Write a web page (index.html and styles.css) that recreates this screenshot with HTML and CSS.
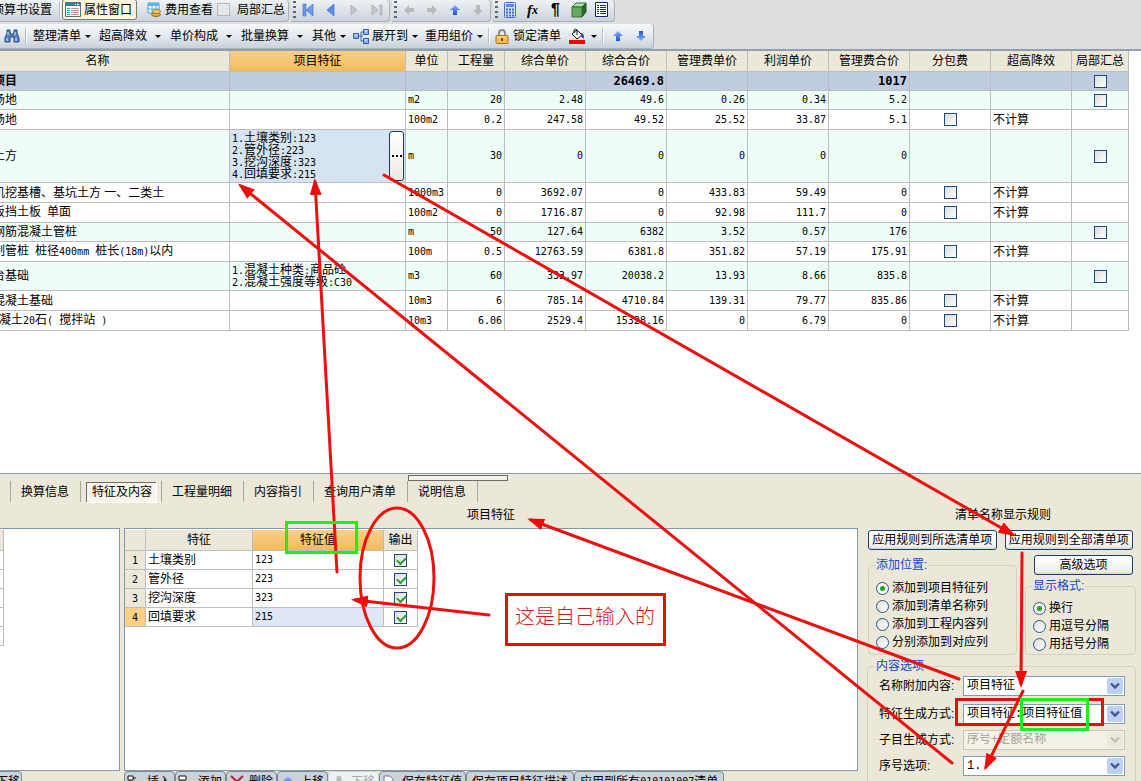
FILE: index.html
```html
<!DOCTYPE html>
<html lang="zh-CN">
<head>
<meta charset="utf-8">
<title>项目特征</title>
<link rel="stylesheet" href="styles.css">
</head>
<body>
<svg class="defs" aria-hidden="true">
  <defs>
    <linearGradient id="blue" x1="0" y1="0" x2="0" y2="1"><stop offset="0" stop-color="#8fb4ff"/><stop offset="1" stop-color="#1f4fd0"/></linearGradient>
    <symbol id="arrow" viewBox="0 0 12 12"><path d="M6 1l5 5H8v5H4V6H1z"/></symbol>
    <symbol id="chev" viewBox="0 0 10 8"><path d="M1 1.500l4 4 4-4" fill="none" stroke="currentColor" stroke-width="2.400"/></symbol>
  </defs>
</svg>
<div class="app">
  <header class="toolbars">
    <div class="bar-row">
      <div class="strip strip-top file-strip">
        <button class="tb">预算书设置</button><i class="sep"></i>
        <button class="tb pressed"><svg width="16" height="15" viewBox="0 0 16 15"><path d="M.5.5h15v14H.5z" fill="#fff" stroke="#58717c"/><path d="M1 1h14v3H1z" fill="#168ca8"/><path d="M10 2h1v1h-1zM12 2h2v1h-2z" fill="#fff"/><path d="M2 6.500h3M2 8.500h3M2 10.500h3M2 12.500h3" stroke="#2a9a8a"/><path d="M6 6.500h8M6 8.500h8M6 10.500h8M6 12.500h8" stroke="#c48f9b"/></svg>属性窗口</button>
        <button class="tb cost"><svg width="14" height="15" viewBox="0 0 14 15"><path d="M1 1h11v10H1z" fill="#e9f5ff" stroke="#4aa0d8"/><path d="M1 1h11v3H1z" fill="#59b7ee"/><path d="M5 4v7M9 4v7M1 7h11" stroke="#6aaedc"/><ellipse cx="9" cy="12.500" rx="4.500" ry="2" fill="#e5a93c" stroke="#9b6a1c"/><ellipse cx="9.500" cy="9.500" rx="4" ry="2" fill="#f8cf66" stroke="#a9752a"/></svg>费用查看</button>
        <label class="tb-check"><input type="checkbox" class="soft">局部汇总</label>
      </div>
      <div class="strip strip-top nav-strip"><i class="grip"></i>
        <button class="ic" aria-label="首条"><svg width="14" height="14" viewBox="0 0 14 14" fill="#6f9bea"><path d="M2 1h3v12H2zM12 1v12L5 7z" stroke="#3f68bd" stroke-width=".6"/></svg></button>
        <button class="ic" aria-label="上一条"><svg width="14" height="14" viewBox="0 0 14 14"><path d="M10 1v12L3 7z" fill="#5b8cf0" stroke="#3c65bd" stroke-width=".6"/></svg></button>
        <button class="ic" aria-label="下一条"><svg width="14" height="14" viewBox="0 0 14 14"><path d="M4 2v10l6-5z" fill="#c3c6c9" stroke="#afb4b8"/></svg></button>
        <button class="ic" aria-label="末条"><svg width="14" height="14" viewBox="0 0 14 14" fill="#c3c6c9" stroke="#afb4b8"><path d="M2 2v10l6-5zM10 2h2v10h-2z"/></svg></button>
      </div>
      <div class="strip strip-top nav-strip"><i class="grip"></i>
        <button class="ic" aria-label="左移"><svg class="off left" width="12" height="12"><use href="#arrow"/></svg></button>
        <button class="ic" aria-label="右移"><svg class="off right" width="12" height="12"><use href="#arrow"/></svg></button>
        <button class="ic" aria-label="上移"><svg class="on" width="12" height="12"><use href="#arrow"/></svg></button>
        <button class="ic" aria-label="下移"><svg class="off down" width="12" height="12"><use href="#arrow"/></svg></button>
      </div>
      <div class="strip strip-top nav-strip"><i class="grip"></i>
        <button class="ic" aria-label="计算器"><svg width="14" height="16" viewBox="0 0 14 16"><rect x="1.500" y=".5" width="11" height="15" rx="1" fill="#d5e4fa" stroke="#4a6eb2"/><path d="M3 2h8v3H3z" fill="#5f8ad8"/><path d="M3 7.500h2m1 0h2m1 0h2M3 10.500h2m1 0h2m1 0h2M3 13.500h2m1 0h2m1 0h2" stroke="#3f6cc0" stroke-width="2"/></svg></button>
        <button class="ic fx" aria-label="函数"><i>f</i><small>x</small></button>
        <button class="ic pil" aria-label="段落">¶</button>
        <button class="ic" aria-label="构件"><svg width="16" height="16" viewBox="0 0 16 16"><path d="M1 5l4-4h10l-4 4z" fill="#b7dfae" stroke="#356f35"/><path d="M11 5l4-4v9l-4 5z" fill="#27692e" stroke="#245227"/><path d="M1 5h10v10H1z" fill="#66a960" stroke="#356f35"/></svg></button>
        <button class="ic" aria-label="清单"><svg width="13" height="15" viewBox="0 0 13 15"><path d="M.5.5h12v14H.5z" fill="#fff" stroke="#12238c"/><path d="M2 3.500h2m1 0h6M2 5.500h2m1 0h6M2 7.500h2m1 0h6M2 9.500h2m1 0h6M2 11.500h2m1 0h6" stroke="#12238c"/></svg></button>
      </div>
    </div>
    <div class="bar-row">
      <div class="strip tool-strip">
        <button class="find" aria-label="查找"><svg width="16" height="14" viewBox="0 0 16 14"><path d="M3 1h3v3h1v2h2V4h1V1h3v3l2 5v4h-5V8H6v5H1V9l2-5z" fill="#5a82bf" stroke="#254b86"/><path d="M3 9v3M12 9v3M4 3v3M11 3v3" stroke="#d8e9ff"/></svg></button><i class="sep"></i>
        <button class="drop tight first">整理清单<b></b></button>
        <button class="drop">超高降效<b></b></button>
        <button class="drop">单价构成<b></b></button>
        <button class="drop">批量换算<b></b></button>
        <button class="drop tight">其他<b></b></button>
        <button class="drop tight"><svg width="16" height="15" viewBox="0 0 16 15"><path d="M5 7h5M8 3v9M8 3h3M8 12h3" stroke="#3d62a8" fill="none"/><path d="M.5 4.500h5v5h-5zM10.500.5h5v5h-5zM10.500 9.500h5v5h-5z" fill="#8ab0ee" stroke="#345ca6"/><path d="M2 6h2M12 2h2M12 11h2" stroke="#fff"/></svg>展开到<b></b></button>
        <button class="drop tight last">重用组价<b></b></button><i class="sep"></i>
        <button class="tb lock"><svg width="14" height="15" viewBox="0 0 14 15"><path d="M4 7V4a3 3 0 016 0v3" fill="none" stroke="#8b8f96" stroke-width="2"/><rect x="1" y="6.500" width="12" height="8" rx="1" fill="#f2bf50" stroke="#a8731c"/><path d="M3 8h8" stroke="#ffe9a6"/><path d="M7 9v3" stroke="#7c4f12" stroke-width="2"/></svg>锁定清单</button>
        <button class="drop paint" aria-label="填充颜色"><svg width="16" height="16" viewBox="0 0 16 16"><path d="M3 6l5-4 5 5-5 4z" fill="#fff" stroke="#111"/><path d="M5 5V2a2 2 0 013 0v5" fill="none" stroke="#111"/><path d="M12 5q4 1 2.500 6L12 8z" fill="#1c3fae"/><path d="M0 12h16v4H0z" fill="#f00"/></svg><b></b></button><i class="sep thin"></i>
        <button class="ic" aria-label="向上"><svg class="on" width="12" height="12"><use href="#arrow"/></svg></button>
        <button class="ic" aria-label="向下"><svg class="on down" width="12" height="12"><use href="#arrow"/></svg></button>
      </div>
    </div>
  </header>

  <main class="bill">
    <table class="grid bill-grid">
      <colgroup><col class="c-name"><col class="c-feat"><col class="c-unit"><col class="c-qty"><col class="c-num"><col class="c-num"><col class="c-num"><col class="c-num"><col class="c-num"><col class="c-num"><col class="c-num"><col class="c-sum"></colgroup>
      <thead><tr><th class="name-head">名称</th><th class="hot">项目特征</th><th>单位</th><th>工程量</th><th>综合单价</th><th>综合合价</th><th>管理费单价</th><th>利润单价</th><th>管理费合价</th><th>分包费</th><th>超高降效</th><th>局部汇总</th></tr></thead>
      <tbody>
        <tr class="h19 total"><td class="nm">项目</td><td></td><td></td><td></td><td></td><td class="n">26469.8</td><td></td><td></td><td class="n">1017</td><td></td><td></td><td class="ck"><input type="checkbox" aria-label="局部汇总"></td></tr>
        <tr class="h19 item"><td class="nm">场地</td><td></td><td class="u">m2</td><td class="n">20</td><td class="n">2.48</td><td class="n">49.6</td><td class="n">0.26</td><td class="n">0.34</td><td class="n">5.2</td><td></td><td></td><td class="ck"><input type="checkbox" aria-label="局部汇总"></td></tr>
        <tr class="h20"><td class="nm">场地</td><td></td><td class="u">100m2</td><td class="n">0.2</td><td class="n">247.58</td><td class="n">49.52</td><td class="n">25.52</td><td class="n">33.87</td><td class="n">5.1</td><td class="ck"><input type="checkbox" aria-label="分包费"></td><td>不计算</td><td></td></tr>
        <tr class="h53 item"><td class="nm">土方</td><td class="sel"><div class="edit"><div class="lines"><div><span>1.</span>土壤类别<span>:123</span></div><div><span>2.</span>管外径<span>:223</span></div><div><span>3.</span>挖沟深度<span>:323</span></div><div><span>4.</span>回填要求<span>:215</span></div></div><button class="more" aria-label="编辑项目特征"><i></i><i></i><i></i></button></div></td><td class="u">m</td><td class="n">30</td><td class="n">0</td><td class="n">0</td><td class="n">0</td><td class="n">0</td><td class="n">0</td><td></td><td></td><td class="ck"><input type="checkbox" aria-label="局部汇总"></td></tr>
        <tr class="h20"><td class="nm">机挖基槽、基坑土方 一、二类土</td><td></td><td class="u">1000m3</td><td class="n">0</td><td class="n">3692.07</td><td class="n">0</td><td class="n">433.83</td><td class="n">59.49</td><td class="n">0</td><td class="ck"><input type="checkbox" aria-label="分包费"></td><td>不计算</td><td></td></tr>
        <tr class="h20"><td class="nm">板挡土板<span> </span>单面</td><td></td><td class="u">100m2</td><td class="n">0</td><td class="n">1716.87</td><td class="n">0</td><td class="n">92.98</td><td class="n">111.7</td><td class="n">0</td><td class="ck"><input type="checkbox" aria-label="分包费"></td><td>不计算</td><td></td></tr>
        <tr class="h19 item"><td class="nm">钢筋混凝土管桩</td><td></td><td class="u">m</td><td class="n">50</td><td class="n">127.64</td><td class="n">6382</td><td class="n">3.52</td><td class="n">0.57</td><td class="n">176</td><td></td><td></td><td class="ck"><input type="checkbox" aria-label="局部汇总"></td></tr>
        <tr class="h20"><td class="nm">制管桩<span> </span>桩径<span>400mm </span>桩长<span>(18m)</span>以内</td><td></td><td class="u">100m</td><td class="n">0.5</td><td class="n">12763.59</td><td class="n">6381.8</td><td class="n">351.82</td><td class="n">57.19</td><td class="n">175.91</td><td class="ck"><input type="checkbox" aria-label="分包费"></td><td>不计算</td><td></td></tr>
        <tr class="h29 item"><td class="nm">台基础</td><td class="feat"><div class="lines"><div><span>1.</span>混凝土种类<span>:</span>商品砼</div><div><span>2.</span>混凝土强度等级<span>:C30</span></div></div></td><td class="u">m3</td><td class="n">60</td><td class="n">333.97</td><td class="n">20038.2</td><td class="n">13.93</td><td class="n">8.66</td><td class="n">835.8</td><td></td><td></td><td class="ck"><input type="checkbox" aria-label="局部汇总"></td></tr>
        <tr class="h20"><td class="nm">混凝土基础</td><td></td><td class="u">10m3</td><td class="n">6</td><td class="n">785.14</td><td class="n">4710.84</td><td class="n">139.31</td><td class="n">79.77</td><td class="n">835.86</td><td class="ck"><input type="checkbox" aria-label="分包费"></td><td>不计算</td><td></td></tr>
        <tr class="h20"><td class="nm deep">混凝土<span>20</span>石<span>( </span>搅拌站<span> )</span></td><td></td><td class="u">10m3</td><td class="n">6.06</td><td class="n">2529.4</td><td class="n">15328.16</td><td class="n">0</td><td class="n">6.79</td><td class="n">0</td><td class="ck"><input type="checkbox" aria-label="分包费"></td><td>不计算</td><td></td></tr>
      </tbody>
    </table>
  </main>

  <section class="props">
    <div class="scrap"></div>
    <nav class="tabs">
      <button>换算信息</button><button class="current"><span>特征及内容</span></button><button>工程量明细</button><button>内容指引</button><button>查询用户清单</button><button>说明信息</button>
    </nav>
    <div class="panes">
      <div class="side">
        <div class="caption"></div>
        <div class="pane side-pane"><table class="grid stub"><thead><tr><th></th></tr></thead><tbody><tr><td></td></tr><tr><td></td></tr><tr><td></td></tr><tr><td></td></tr><tr><td></td></tr></tbody></table></div>
        <div class="cmds"><button class="stub-cmd">下移</button></div>
      </div>
      <div class="center">
        <div class="caption">项目特征</div>
        <div class="pane">
          <table class="grid feat-grid">
            <colgroup><col class="f-no"><col class="f-name"><col class="f-val"><col class="f-out"></colgroup>
            <thead><tr><th></th><th>特征</th><th class="hot">特征值</th><th>输出</th></tr></thead>
            <tbody>
              <tr><th><span>1</span></th><td>土壤类别</td><td class="v">123</td><td class="ck"><input type="checkbox" checked aria-label="输出"></td></tr>
              <tr><th><span>2</span></th><td>管外径</td><td class="v">223</td><td class="ck"><input type="checkbox" checked aria-label="输出"></td></tr>
              <tr><th><span>3</span></th><td>挖沟深度</td><td class="v">323</td><td class="ck"><input type="checkbox" checked aria-label="输出"></td></tr>
              <tr><th class="cur"><span>4</span></th><td>回填要求</td><td class="v cur-v">215</td><td class="ck"><input type="checkbox" checked aria-label="输出"></td></tr>
            </tbody>
          </table>
        </div>
        <div class="cmds">
          <button><svg width="16" height="14" viewBox="0 0 16 14"><path d="M1 1h5v4H1zM3 5v8h4M6 3h3" fill="#fff" stroke="#111"/><path d="M8 5l-3 3 3 3V9h6V7H8z" fill="#1c3fae"/></svg>插入</button>
          <button><svg width="16" height="14" viewBox="0 0 16 14"><path d="M1 1h7v4H1zM3 5v4h5M10 7h5v5h-5z" fill="#fff" stroke="#111"/></svg>添加</button>
          <button><svg width="16" height="14" viewBox="0 0 16 14"><path d="M2 1l12 11M14 1L2 12" stroke="#c8143c" stroke-width="2"/></svg>删除</button>
          <button><svg class="on" width="16" height="14"><use href="#arrow"/></svg>上移</button>
          <button disabled><svg class="off down" width="16" height="14"><use href="#arrow"/></svg>下移</button>
          <button class="wide"><svg width="16" height="14" viewBox="0 0 16 14"><path d="M2 1h6l3 3v9H2z" fill="#fff" stroke="#6b7a9b"/><path d="M5 4v5h5V7l5 3-5 3v-2H5" fill="#5a66d0"/></svg>保存特征值</button>
          <button>保存项目特征描述</button>
          <button>应用到所有<span>010101007</span>清单</button>
        </div>
      </div>
      <aside class="rules">
        <div class="caption">清单名称显示规则</div>
        <div class="apply"><button class="xp">应用规则到所选清单项</button><button class="xp">应用规则到全部清单项</button></div>
        <div class="opts">
          <fieldset class="place"><legend>添加位置:</legend>
            <label><input type="radio" name="place" checked>添加到项目特征列</label>
            <label><input type="radio" name="place">添加到清单名称列</label>
            <label><input type="radio" name="place">添加到工程内容列</label>
            <label><input type="radio" name="place">分别添加到对应列</label>
          </fieldset>
          <div class="right-col">
            <button class="xp adv">高级选项</button>
            <fieldset class="format"><legend>显示格式:</legend>
              <label><input type="radio" name="fmt" checked>换行</label>
              <label><input type="radio" name="fmt">用逗号分隔</label>
              <label><input type="radio" name="fmt">用括号分隔</label>
            </fieldset>
          </div>
        </div>
        <fieldset class="content"><legend>内容选项</legend>
          <div class="field"><label for="s1">名称附加内容:</label><div class="combo"><select id="s1"><option>项目特征</option></select><svg><use href="#chev"/></svg></div></div>
          <div class="field gap-above"><label for="s2">特征生成方式:</label><div class="combo"><select id="s2"><option>项目特征:项目特征值</option></select><svg><use href="#chev"/></svg></div></div>
          <div class="field"><label for="s3">子目生成方式:</label><div class="combo dis"><select id="s3" disabled><option>序号+定额名称</option></select><svg><use href="#chev"/></svg></div></div>
          <div class="field"><label for="s4">序号选项:</label><div class="combo"><select id="s4"><option>1.</option></select><svg><use href="#chev"/></svg></div></div>
        </fieldset>
      </aside>
    </div>
  </section>

  <svg class="notes" width="1141" height="781" viewBox="0 0 1141 781">
    <defs><marker id="head" markerUnits="userSpaceOnUse" markerWidth="18" markerHeight="12" refX="13" refY="6" orient="auto"><path d="M17 6L0 0v12z" fill="#f00a0a"/></marker></defs>
    <g fill="none" stroke="#ee0f0f" stroke-width="3" stroke-linecap="round">
      <path d="M337 572L315 182" marker-end="url(#head)"/>
      <path d="M952 763L241 186" marker-end="url(#head)"/>
      <path d="M384 175L1012 534" marker-end="url(#head)"/>
      <path d="M959 679L531 520" marker-end="url(#head)"/>
      <path d="M1022 553L1021 684" marker-end="url(#head)"/>
      <path d="M1023 691L986 767" marker-end="url(#head)"/>
      <path d="M489 615L355 600" marker-end="url(#head)"/>
      <ellipse cx="397" cy="578" rx="37" ry="70"/>
    </g>
    <g fill="none" stroke-width="3">
      <path d="M506.500 594.500h158v50h-158zM956.500 699.500h146v25h-146z" stroke="#e01010"/>
      <path d="M286.500 522.500h70v30h-70zM1021.500 699.500h66v30h-66z" stroke="#1cf01c"/>
    </g>
    <text x="515" y="624" class="note-text">这是自己输入的</text>
  </svg>
</div>
</body>
</html>
```
FILE: styles.css
```css
* { box-sizing: border-box; }
body {
  margin: 0;
  font: 12px/14px "Liberation Sans", "Noto Sans CJK SC", sans-serif;
  color: #000;
  background: #fff;
}
button { font: inherit; color: inherit; padding: 0; border: 0; background: none; white-space: nowrap; }
svg { flex: none; }
.defs { position: absolute; width: 0; height: 0; }
.app { position: relative; height: 100vh; display: flex; flex-direction: column; overflow: hidden; }

/* toolbars */
.toolbars { flex: none; background: #dedede; border-bottom: 2px solid #8f9fb0; display: flex; flex-direction: column; gap: 2px; }
.bar-row { display: flex; gap: 2px; }
.strip {
  display: flex; align-items: center; height: 25px;
  background: linear-gradient(#f6f9fb, #e3e9ee 50%, #c9d1d8);
  border-right: 1px solid #a9b2ba; border-bottom: 1px solid #a9b2ba;
  border-radius: 0 4px 4px 0;
}
.strip-top { height: 22px; padding-bottom: 2px; background: linear-gradient(#eef2f5, #cbd3da); }
.file-strip { width: 289px; }
.tb { display: flex; align-items: center; gap: 3px; }
.file-strip > .tb:first-child { margin-left: -8px; }
.sep { width: 2px; height: 16px; margin: 0 5px; flex: none; background: #b7bfc6; border-right: 1px solid #fff; }
.sep.thin { margin-right: 2px; }
.file-strip .sep { margin: 0 1px 0 7px; }
.pressed { height: 21px; padding: 0 4px 0 2px; background: #fdf6dc; border: 1px solid #777b70; border-radius: 3px; }
.cost { margin-left: 10px; gap: 4px; }
.tb-check { display: flex; align-items: center; gap: 7px; margin-left: 4px; white-space: nowrap; }
.grip { width: 3px; height: 17px; margin-left: 2px; background: repeating-linear-gradient(#5c6670 0 2px, transparent 2px 5px); }
.nav-strip { padding-right: 1px; }
.ic { width: 23px; height: 18px; display: flex; align-items: center; justify-content: center; }
.fx { font: bold 15px/16px "Liberation Serif", serif; }
.fx small { font-size: 12px; font-style: italic; }
.pil { font: bold 16px/16px "Liberation Sans", sans-serif; }
.on { fill: url(#blue); }
.off { fill: #b6babd; }
.left { transform: rotate(-90deg); }
.right { transform: rotate(90deg); }
.down { transform: rotate(180deg); }
.find { margin-left: 4px; display: flex; }
.drop { display: flex; align-items: center; margin-right: 9px; }
.drop.first { margin-left: 1px; }
.drop svg { margin-right: 3px; }
.drop b { border: 3px solid transparent; border-top-color: #000; border-bottom: 0; margin-left: 8px; }
.drop.tight { margin-right: 7px; }
.drop.first { margin-right: 8px; }
.drop.tight b { margin-left: 4px; }
.drop.last, .drop.paint { margin-right: 0; }
.lock { margin-right: 8px; gap: 4px; }
.drop.paint b { margin-left: 3px; }
.tool-strip { padding-right: 1px; }

/* grids */
.grid { border-collapse: separate; border-spacing: 0; table-layout: fixed; }
.grid th, .grid td {
  padding: 0 2px; border: solid #bdbdbd; border-width: 0 1px 1px 0;
  font-weight: normal; overflow: hidden; white-space: nowrap; line-height: 12px;
}
.grid th { background: #ebe8d9; text-align: center; }
.grid thead tr { height: 21px; }
.grid th.hot { background: linear-gradient(#f9d089, #f2bb5b); }
.grid span, .n, .u, .grid .v { font-family: "DejaVu Sans Mono", monospace; font-size: 10px; }
.bill { flex: 1; overflow: hidden; background: #fff; min-height: 0; }
.bill-grid { width: 1129px; }
.c-name { width: 230px; } .c-feat { width: 176px; } .c-unit { width: 42px; } .c-qty { width: 57px; } .c-num { width: 81px; } .c-sum { width: 57px; }
.bill-grid th.name-head { padding-right: 36px; }
.h19 { height: 19px; } .h20 { height: 20px; } .h29 { height: 29px; } .h53 { height: 53px; }
.item { background: #effdf9; }
.total { background: #c0cde0; }
.total td { font-weight: bold; font-size: 12px; }
.nm { text-indent: -9px; }
.nm.deep { text-indent: -15px; }
.n { text-align: right; }
.grid .ck { text-align: center; padding: 0; line-height: 0; }
.lines { text-indent: 0; line-height: 12px; }
.lines div { height: 12px; }
.grid .sel { background: #d5e4f0; padding: 0 1px 0 2px; }
.edit { display: flex; align-items: center; justify-content: space-between; }
.more { width: 15px; height: 50px; border: 1px solid #1f3a66; border-radius: 3px; background: linear-gradient(#fff, #ece9e0); display: flex; gap: 2px; align-items: center; justify-content: center; }
.more i { width: 2px; height: 2px; background: #000; }

input[type="checkbox"] {
  appearance: none; margin: 0; width: 13px; height: 13px; vertical-align: middle;
  border: 1px solid #1d4a78; background: linear-gradient(135deg, #d9dcdc, #fff);
}
input[type="checkbox"].soft { border-color: #b5b9bc; background: #e4e8eb; }
input[type="checkbox"]:checked::after {
  content: ""; display: block; width: 7px; height: 4px; margin: 2px 0 0 2px;
  border: solid #2a9a2a; border-width: 0 0 2px 2px; transform: rotate(-45deg);
}

/* property panel */
.props { position: relative; flex: none; background: #ebe8d9; border-top: 1px solid #8596a8; display: flex; flex-direction: column; height: 308px; }
.scrap { position: absolute; left: 408px; top: 1px; width: 100px; height: 6px; border: 1px solid #6d6d66; background: #f3f1e8; }
.tabs { display: flex; height: 21px; margin: 7px 0 0 10px; }
.tabs button { padding: 0 11px 0 10px; border-right: 1px solid #a9a79b; }
.tabs button:first-child { border-left: 1px solid #a9a79b; }
.tabs .current { padding: 0 5px; }
.current span { display: block; line-height: 19px; padding: 0 4px 0 5px; background: #f5f3ea; border: solid #6e6d66; border-width: 1px 0 0 1px; box-shadow: 1px 1px #fff; }
.panes { flex: 1; display: flex; min-height: 0; }
.side { flex: none; width: 120px; display: flex; flex-direction: column; }
.center { flex: 1; min-width: 0; margin-left: 4px; display: flex; flex-direction: column; }
.caption { height: 26px; line-height: 27px; text-align: center; flex: none; }
.pane { height: 243px; flex: none; background: #fff; border: 1px solid #8596a8; }
.side-pane { border-left: 0; padding-top: 1px; }
.center .pane { padding-top: 1px; }
.stub { width: 4px; }
.stub tbody tr, .feat-grid tbody tr { height: 19px; }
.grid.stub th, .grid.stub td { padding: 0; }
.feat-grid { width: 293px; }
.f-no { width: 21px; } .f-name { width: 107px; } .f-val { width: 131px; } .f-out { width: 34px; }
.grid th.cur { background: #fbd188; }
.grid .cur-v { background: #dfe7f5; }
.cmds { display: flex; }
.cmds button {
  display: flex; align-items: center; gap: 4px; height: 22px; padding: 0 5px 0 5px;
  background: #cbd2d8; border: 1px solid #7d8996; border-radius: 4px;
}
.cmds button:has(svg) { padding: 0 3px 0 2px; }
.cmds button:disabled { background: #eef0f1; border-color: #d2d6d9; color: #a9acae; }
.cmds span { font-family: "DejaVu Sans Mono", monospace; font-size: 10px; margin: 0 -4px; }
.cmds .stub-cmd { margin-left: -10px; width: 32px; }

/* display rules */
.rules { flex: none; width: 283px; padding: 0 5px 0 8px; }
.rules .caption { margin-right: -4px; height: 28px; }
.apply { display: flex; gap: 8px; margin: 0 3px 0 2px; }
.xp { flex: 1; height: 20px; border: 1px solid #173f70; border-radius: 3px; background: linear-gradient(#fff, #f0efe8 85%, #d9d5c8); }
.opts { display: flex; justify-content: space-between; padding-top: 5px; margin-left: 2px; }
fieldset { margin: 0; border: 1px solid #d3d0bf; border-radius: 4px; min-width: 0; }
legend { padding: 0 1px; color: #1048c8; line-height: 14px; }
.place { width: 149px; margin-top: 3px; padding: 7px 7px 3px; }
.place legend, .format legend { margin-left: -1px; }
.place label, .format label { display: flex; align-items: center; gap: 3px; height: 18px; white-space: nowrap; }
.right-col { width: 111px; }
.adv { display: block; width: 99px; margin-left: 9px; }
.format { margin-top: 4px; padding: 6px 7px 1px; }
input[type="radio"] { appearance: none; margin: 0; width: 13px; height: 13px; border: 1px solid #2a5685; border-radius: 50%; background: linear-gradient(135deg, #dfe0dc, #fff); }
input[type="radio"]:checked { background: radial-gradient(circle, #22a022 0 2px, #f6f6f2 3px); }
.content { padding: 3px 10px 8px; margin: 4px 0 0 1px; }
.content legend { margin-left: -3px; }
.field { display: flex; align-items: center; margin-bottom: 6px; }
.field label { width: 85px; padding-left: 1px; white-space: nowrap; }
.gap-above { margin-top: 8px; }
.combo { position: relative; flex: 1; height: 20px; }
select { appearance: none; width: 100%; height: 20px; padding: 0 18px 0 3px; border: 1px solid #7f9db9; border-radius: 0; background: #fff; font: 12px "Liberation Mono", "Noto Sans CJK SC", monospace; color: #000; }
.combo svg { position: absolute; right: 2px; top: 2px; width: 16px; height: 16px; padding: 4px 3px; background: #bfd0f6; border-radius: 2px; color: #3f5788; pointer-events: none; }
.dis select { background: #f3f1e8; border-color: #c9c7ba; color: #a5a296; opacity: 1; }
.dis svg { background: #ebe9de; color: #c0bdb0; }

/* annotations */
.notes { position: absolute; left: 0; top: 0; pointer-events: none; }
.note-text { font: 300 20px "Noto Sans CJK SC", sans-serif; fill: #d81818; }
```
